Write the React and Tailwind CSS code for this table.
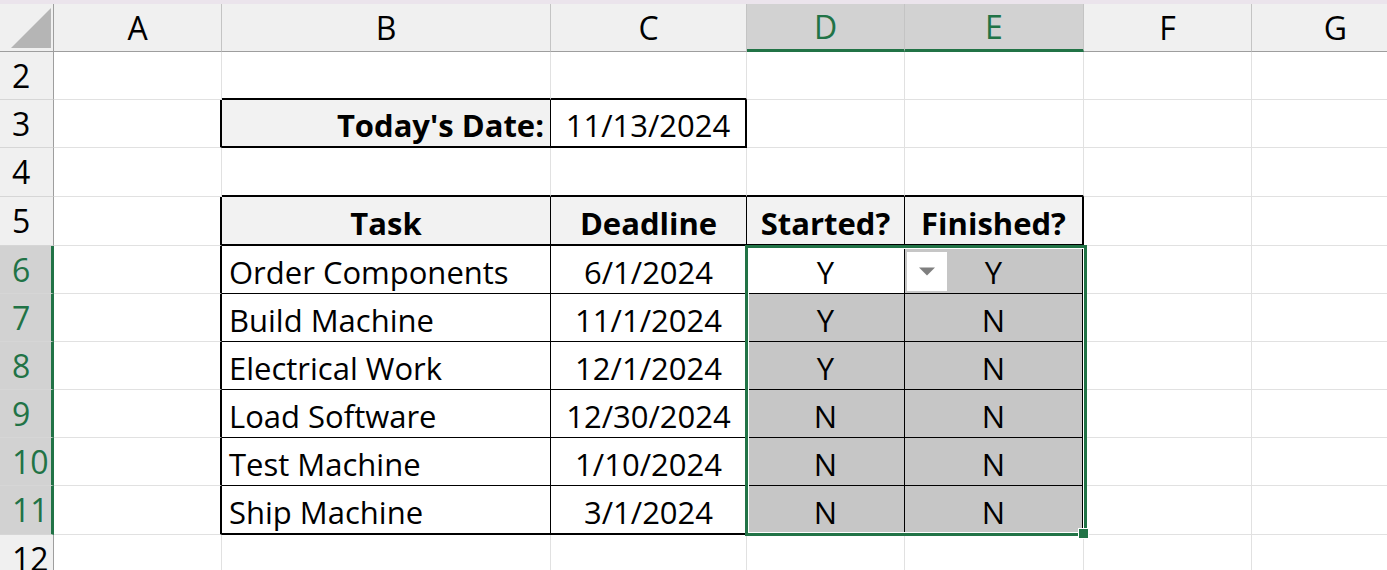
import React from 'react';

const COLS = ['A', 'B', 'C', 'D', 'E', 'F', 'G'];
const ROWS = [2, 3, 4, 5, 6, 7, 8, 9, 10, 11, 12];
const ROW_H = {
  2: 'h-[48px]', 3: 'h-[48px]', 4: 'h-[49px]', 5: 'h-[49px]', 6: 'h-[48px]', 7: 'h-[48px]',
  8: 'h-[48px]', 9: 'h-[48px]', 10: 'h-[48px]', 11: 'h-[49px]', 12: 'h-[48px]',
};

const TASKS = [
  ['Order Components', '6/1/2024', 'Y', 'Y'],
  ['Build Machine', '11/1/2024', 'Y', 'N'],
  ['Electrical Work', '12/1/2024', 'Y', 'N'],
  ['Load Software', '12/30/2024', 'N', 'N'],
  ['Test Machine', '1/10/2024', 'N', 'N'],
  ['Ship Machine', '3/1/2024', 'N', 'N'],
];

const inTable = (r, c) => r >= 5 && r <= 11 && ['B', 'C', 'D', 'E'].includes(c);
const inDate = (r, c) => r === 3 && (c === 'B' || c === 'C');

function cellContent(r, c) {
  if (r === 3 && c === 'B') return { text: "Today's Date:", bold: true, align: 'right', fill: 'head' };
  if (r === 3 && c === 'C') return { text: '11/13/2024', align: 'center' };
  if (r === 5) {
    const m = { B: 'Task', C: 'Deadline', D: 'Started?', E: 'Finished?' };
    if (m[c]) return { text: m[c], bold: true, align: 'center', fill: 'head' };
  }
  if (r >= 6 && r <= 11) {
    const t = TASKS[r - 6];
    const idx = { B: 0, C: 1, D: 2, E: 3 }[c];
    if (idx !== undefined) {
      const sel = (c === 'D' || c === 'E') && !(r === 6 && c === 'D');
      return { text: t[idx], align: idx === 0 ? 'left' : 'center', fill: sel ? 'sel' : null };
    }
  }
  return null;
}

function Cell({ r, c }) {
  const content = cellContent(r, c);
  const black = inTable(r, c) || inDate(r, c);

  let rb = 'border-r border-r-[#e1e1e1]';
  const thickR =
    (c === 'A' && (r === 3 || (r >= 5 && r <= 11))) ||
    (c === 'C' && r === 3) ||
    (c === 'E' && r >= 5 && r <= 11);
  if (thickR) rb = 'border-r-2 border-r-black';
  else if (black) rb = 'border-r border-r-black';

  let bb = 'border-b border-b-[#e1e1e1]';
  const thickB =
    (r === 2 && (c === 'B' || c === 'C')) ||
    (r === 3 && (c === 'B' || c === 'C')) ||
    (r === 4 && ['B', 'C', 'D', 'E'].includes(c)) ||
    (r === 5 && ['B', 'C', 'D', 'E'].includes(c)) ||
    (r === 11 && ['B', 'C', 'D', 'E'].includes(c));
  if (thickB) bb = 'border-b-2 border-b-black';
  else if (black) bb = 'border-b border-b-black';

  let bg = 'bg-white';
  if (content?.fill === 'head') bg = 'bg-[#f2f2f2]';
  if (content?.fill === 'sel') bg = 'bg-[#c6c6c6]';

  let justify = 'justify-center';
  if (content?.align === 'left') justify = 'justify-start pl-[7px]';
  if (content?.align === 'right') justify = 'justify-end pr-[6px]';

  return (
    <div className={`relative flex items-center pt-[5px] ${ROW_H[r]} ${rb} ${bb} ${bg} ${justify}`}>
      {r === 6 && c === 'E' && (
        <div className="absolute left-[1px] top-[5px] w-[42px] h-[41px] bg-white border border-[#c6c6c6] flex items-center justify-center">
          <svg width="18" height="9" viewBox="0 0 18 9">
            <polygon points="1,0.5 17,0.5 9,8.5" fill="#7f7f7f" />
          </svg>
        </div>
      )}
      {content && (
        <span
          className={`whitespace-nowrap leading-none text-[31px] text-black ${content.bold ? 'font-bold' : 'font-normal'}`}
          style={{ fontFamily: '"Open Sans", "Noto Sans", sans-serif' }}
        >
          {content.text}
        </span>
      )}
    </div>
  );
}

function ColHeader({ c }) {
  const sel = c === 'D' || c === 'E';
  return (
    <div
      className={`flex items-center justify-center h-[48px] border-r border-r-[#c4c4c4] ${
        sel ? 'bg-[#d2d2d2] text-[#217346] border-b-[3px] border-b-[#217346]' : 'bg-[#f0f0f0] text-black border-b border-b-[#9e9e9e]'
      }`}
    >
      <span className="leading-none text-[32px]" style={{ fontFamily: '"Open Sans", "Noto Sans", sans-serif' }}>
        {c}
      </span>
    </div>
  );
}

function RowHeader({ r }) {
  const sel = r >= 6 && r <= 11;
  return (
    <div
      className={`flex items-center pl-[12px] ${ROW_H[r]} border-b border-b-[#d6d6d6] ${
        sel ? 'bg-[#d2d2d2] text-[#217346] border-r-[3px] border-r-[#217346]' : 'bg-[#f0f0f0] text-black border-r border-r-[#9e9e9e]'
      }`}
    >
      <span className="leading-none text-[32px]" style={{ fontFamily: '"Open Sans", "Noto Sans", sans-serif' }}>
        {r}
      </span>
    </div>
  );
}

export default function App() {
  return (
    <div className="w-[1387px] h-[570px] overflow-hidden bg-white">
      <div className="h-[4px] bg-[#ebe4ec]" />
      <div className="relative grid grid-cols-[54px_168px_329px_196px_158px_179px_168px_168px]">
        <div className="h-[48px] bg-[#f0f0f0] border-r border-r-[#9e9e9e] border-b border-b-[#9e9e9e] flex items-end justify-end pr-[2px] pb-[3px]">
          <svg width="40" height="40" viewBox="0 0 40 40">
            <polygon points="0,40 40,40 40,0" fill="#b5b5b5" />
          </svg>
        </div>
        {COLS.map((c) => (
          <ColHeader key={c} c={c} />
        ))}
        {ROWS.map((r) => (
          <React.Fragment key={r}>
            <RowHeader r={r} />
            {COLS.map((c) => (
              <Cell key={c} r={r} c={c} />
            ))}
          </React.Fragment>
        ))}
        <div className="absolute left-[745px] top-[241px] w-[342px] h-[291px] border-[3px] border-[#217346] shadow-[inset_0_0_0_1px_white] pointer-events-none" />
        <div className="absolute left-[1078px] top-[524px] w-[11px] h-[11px] bg-[#217346] border border-white" />
      </div>
    </div>
  );
}
